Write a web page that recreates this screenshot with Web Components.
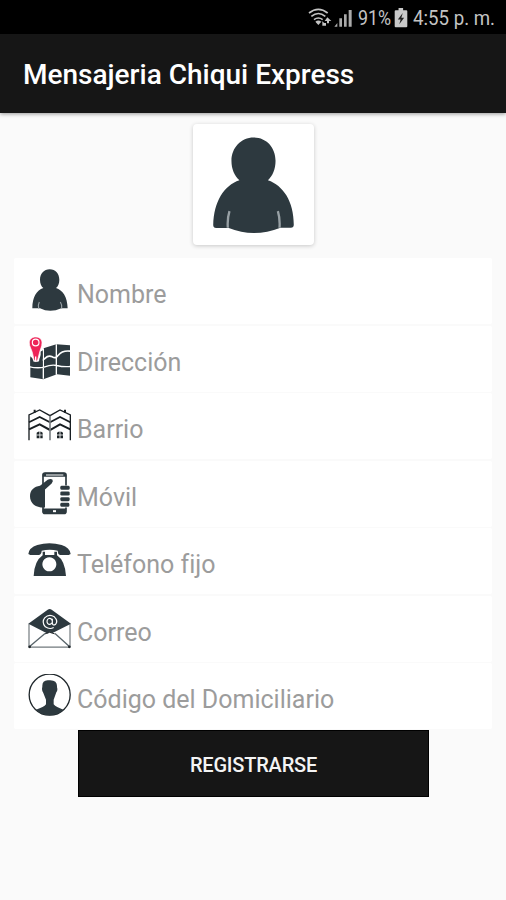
<!DOCTYPE html>
<html lang="es">
<head>
<meta charset="utf-8">
<title>Mensajeria Chiqui Express</title>
<style>
html,body{margin:0;height:100%;background:#fafafa;font-family:Roboto,"Liberation Sans",sans-serif}
</style>
</head>
<body>
<register-screen></register-screen>
<script>
const INK = '#2d393f';

const ICONS = {
  avatar: ['39 34 365 365', `
    <path fill="${INK}" d="M222 75C261 75 288 106 288 145C288 170 279 191 265 204C311 220 343 267 343 338Q343 347 334 347H303Q262 363 222 363Q185 363 147 348H109Q100 348 100 339C102 268 132 220 179 204C164 190 155 170 155 145C155 106 184 75 222 75Z"/>
    <path fill="none" stroke="#98a1a5" stroke-width="7" d="M149 297Q142 320 144 347M295 297Q302 320 300 347"/>`],
  person: ['54 42 132 132', `
    <path fill="${INK}" d="M119 43C137 43 148 57 148 74C148 86 144 94 138 99C158 105 172 125 173 160H154Q120 175 90 160H67C67 126 80 106 100 99C94 94 90 86 90 74C90 57 102 43 119 43Z"/>
    <path fill="none" stroke="#98a1a5" stroke-width="3.5" d="M88 141Q83 150 86 161M151 141Q157 150 155 161"/>`],
  map: ['54 34.5 132 132', `
    <path fill="${INK}" d="M61 91L98 69L139 56L180 59V151L141 146L100 161L61 155Z"/>
    <g fill="none" stroke="#fff">
      <path stroke-width="4" d="M60 124Q82 129 102 125Q125 116 140 120Q160 125 181 123M100 68V160M139 56V148"/>
      <path stroke-width="5" d="M76 106Q99 106 106 98Q115 88 127 94Q138 101 145 89Q157 74 181 77"/>
    </g>
    <path fill="#fff" d="M54 34H99V72L84 111H68L54 82Z"/>
    <path fill="${INK}" d="M61 92L67 98L71 109L86 109L92 94L92 78L98 75V123Q80 127 61 121Z"/>
    <path fill="#ee2458" stroke="#fff" stroke-width="2" d="M77 34.500C89 34.500 96 42 96 52C96 64 91 70 88 83L83 103Q77 113 72 103L68 85C65 71 58 64 58 52C58 42 65 34.500 77 34.500Z"/>
    <circle cx="77" cy="51" r="10" fill="none" stroke="#fff" stroke-width="3.500"/>
    <path stroke="#fff" stroke-width="4" d="M77 93V108"/>`],
  houses: ['54 33 132 132', `
    <g fill="none" stroke="#181e22" stroke-width="5">
      <path d="M57 142V66L89 51L120 68L150 51L181 66V142" stroke-width="4"/>
      <path d="M57 88L89 72L120 88L150 72L181 88"/>
      <path d="M57 109L89 94L120 111L150 94L181 109" stroke-width="6"/>
    </g>
    <path d="M120 68V142" stroke="#7c8285" stroke-width="5"/>
    <path d="M74 59V50M165 59V50" stroke="#181e22" stroke-width="6"/>
    <path fill="#1d2428" d="M80 136V119Q89 112 98 119V136ZM141 136V119Q150 112 159 119V136Z"/>
    <path stroke="#fff" stroke-width="2.5" d="M89.500 114V137M80 126H98M150 114V137M141 126H159"/>`],
  mobile: ['54 34.5 132 132', `
    <rect x="99" y="38" width="69" height="121" rx="6" fill="#fff" stroke="${INK}" stroke-width="5"/>
    <path fill="${INK}" d="M99 144H168V156Q168 160 162 160H104Q98 160 98 154ZM98 49V42Q98 37 105 37H162Q169 37 169 43V49Z"/>
    <path stroke="#fff" stroke-width="3" d="M108 43.500H160"/>
    <path stroke="#fff" stroke-width="6" d="M129 152H138"/>
    <path fill="${INK}" d="M101 141C77 141 60 129 60 107C60 89 73 78 90 76L113 58Q121 53 127 57Q131 62 125 69L105 87V141Z"/>
    <path stroke="#fff" stroke-width="8" d="M168 75V141"/>
    <g fill="${INK}"><rect x="151" y="76" width="28" height="12" rx="4"/><rect x="151" y="93" width="28" height="12" rx="4"/><rect x="151" y="110" width="28" height="12" rx="4"/><rect x="151" y="127" width="27" height="12" rx="4"/></g>`],
  phone: ['54 33 132 132', `
    <path fill="${INK}" d="M55 78Q57 59 82 51Q118 40 155 51Q179 58 182 78L176 81H150Q143 78 143 68Q119 63 95 68Q95 78 87 81H61Z"/>
    <path fill="${INK}" fill-rule="evenodd" d="M98 71H105V81H133V71H141V82Q165 98 168 144H71Q73 99 98 82ZM118 88A21 21 0 1 0 118.100 88Z"/>`],
  mail: ['54 31.5 132 132', `
    <path fill="#fff" stroke="#71797d" stroke-width="3.500" d="M57 82V152H180V82"/>
    <path fill="none" stroke="#59656b" stroke-width="4" d="M58 151L105 111M179 151L135 111"/>
    <path fill="${INK}" d="M55 82L113 40Q119 35 125 40L183 82L126 110L120 106L112 111Z"/>
    <path fill="none" stroke="#20282c" stroke-width="3" d="M105 112Q119 103 134 112"/>
    <circle cx="59" cy="151" r="4" fill="#20282c"/><circle cx="178" cy="151" r="4" fill="#20282c"/>
    <path fill="none" stroke="#fff" stroke-width="3.500" d="M131 93Q119 100 106 91Q94 77 104 64Q117 51 133 61Q145 73 137 83Q128 89 127 80V67M127 75A8 9 0 1 0 126 79"/>`],
  member: ['84 42 132 132', `
    <clipPath id="disc"><circle cx="149" cy="104" r="62"/></clipPath>
    <circle cx="149" cy="104" r="61.500" fill="#fff" stroke="#20282c" stroke-width="4"/>
    <path clip-path="url(#disc)" fill="${INK}" d="M127 80Q126 62 143 61Q173 57 171 82Q174 91 169 97L161 119V133Q168 142 190 149Q178 169 149 169Q120 169 108 149Q132 142 138 133V119L130 99Q124 91 127 80Z"/>`],
  wifi: ['36 20 132 66', `
    <g fill="none" stroke="#c4c4c4" stroke-width="5">
      <path d="M39 38Q67 16 95 38M46 48Q67 31 88 48M54 58Q67 48 80 58"/></g>
    <path fill="#c4c4c4" d="M58 64Q67 57 76 64L67 74ZM77 62L88 70L83 76ZM94 51L106 62H99V69H93V62H86ZM79 68H90V76H79Z"/>
    <path fill="#aaa" d="M115 79L124 68V79ZM130 79V54H138V79ZM144 79V42H152V79ZM158 79V29H167V79Z"/>`],
  battery: ['296 22 40 60', `
    <path fill="#c9c9c9" d="M309 25H322V31H331Q334 31 334 34V77Q334 80 331 80H301Q298 80 298 77V34Q298 31 301 31H309Z"/>
    <path fill="#222" d="M321 39L307 58H315L311 71L325 53H317Z"/>`]
};

class ScIcon extends HTMLElement {
  constructor(){ super(); this.attachShadow({mode:'open'}); }
  connectedCallback(){
    const [box, art] = ICONS[this.getAttribute('name')];
    this.shadowRoot.innerHTML = `<style>:host{display:block;flex:none}svg{display:block;width:100%;height:100%}</style>
      <svg viewBox="${box}" aria-hidden="true">${art}</svg>`;
  }
}
customElements.define('sc-icon', ScIcon);

class StatusBar extends HTMLElement {
  constructor(){
    super();
    this.attachShadow({mode:'open'}).innerHTML = `<style>
      :host{display:flex;height:34px;box-sizing:border-box;background:#000;color:#c4c4c4;justify-content:flex-end;padding-right:11px;font-size:21px;line-height:36px}
      .net{width:44px;height:22px;margin-top:7px}
      .bat{width:14px;height:21px;margin:7px 5px 0 3px}
      span{display:block;white-space:nowrap;transform-origin:0 50%}
      .pct{width:33px;margin-left:6px;transform:scaleX(.85)}
      .time{width:82px;transform:scaleX(.89)}
    </style><sc-icon class="net" name="wifi"></sc-icon><span class="pct">91%</span><sc-icon class="bat" name="battery"></sc-icon><span class="time">4:55 p. m.</span>`;
  }
}
customElements.define('status-bar', StatusBar);

class AppBar extends HTMLElement {
  constructor(){
    super();
    this.attachShadow({mode:'open'}).innerHTML = `<style>
      :host{display:flex;align-items:center;height:79px;padding:2px 23px 0;box-sizing:border-box;background:#161616;color:#fff;font-size:28px;font-weight:500;box-shadow:0 1px 4px rgba(0,0,0,.4);white-space:nowrap}
    </style><slot></slot>`;
  }
}
customElements.define('app-bar', AppBar);

class AvatarCard extends HTMLElement {
  constructor(){
    super();
    this.attachShadow({mode:'open'}).innerHTML = `<style>
      :host{display:block;width:121px;height:121px;margin:11px auto 13px;background:#fff;border-radius:4px;box-shadow:0 1px 4px rgba(0,0,0,.2)}
      sc-icon{width:100%;height:100%}
    </style><sc-icon name="avatar"></sc-icon>`;
  }
}
customElements.define('avatar-card', AvatarCard);

class FormField extends HTMLElement {
  constructor(){ super(); this.attachShadow({mode:'open'}); }
  connectedCallback(){
    this.shadowRoot.innerHTML = `<style>
      :host{display:flex;align-items:center;height:66px;padding-left:14px;gap:5px;background:#fff;color:#9c9c9c;font-size:25px;font-variant-ligatures:none;border-radius:2px;white-space:nowrap}
      sc-icon{width:44px;height:44px}
      .hint{padding-top:8px;line-height:30px}
    </style><sc-icon name="${this.getAttribute('icon')}"></sc-icon><div class="hint"><slot></slot></div>`;
  }
}
customElements.define('form-field', FormField);

class SubmitButton extends HTMLElement {
  constructor(){
    super();
    this.attachShadow({mode:'open'}).innerHTML = `<style>
      :host{display:block;width:351px;height:67px;margin:1px 77px 0 78px}
      button{display:block;width:100%;height:100%;border:1px solid #000;background:#161616;color:#f4f4f4;font:500 20px Roboto,sans-serif;letter-spacing:-.2px;padding:2px 0 0}
    </style><button><slot></slot></button>`;
  }
}
customElements.define('submit-button', SubmitButton);

class RegisterScreen extends HTMLElement {
  constructor(){
    super();
    this.attachShadow({mode:'open'}).innerHTML = `<style>
      :host{display:block;height:900px;overflow:hidden;background:#fafafa}
      .form{display:grid;gap:1.500px;margin:0 14px}
    </style>
    <status-bar></status-bar>
    <app-bar>Mensajeria Chiqui Express</app-bar>
    <avatar-card></avatar-card>
    <div class="form">
      <form-field icon="person">Nombre</form-field>
      <form-field icon="map">Dirección</form-field>
      <form-field icon="houses">Barrio</form-field>
      <form-field icon="mobile">Móvil</form-field>
      <form-field icon="phone">Teléfono fijo</form-field>
      <form-field icon="mail">Correo</form-field>
      <form-field icon="member">Código del Domiciliario</form-field>
    </div>
    <submit-button>REGISTRARSE</submit-button>`;
  }
}
customElements.define('register-screen', RegisterScreen);
</script>
</body>
</html>
